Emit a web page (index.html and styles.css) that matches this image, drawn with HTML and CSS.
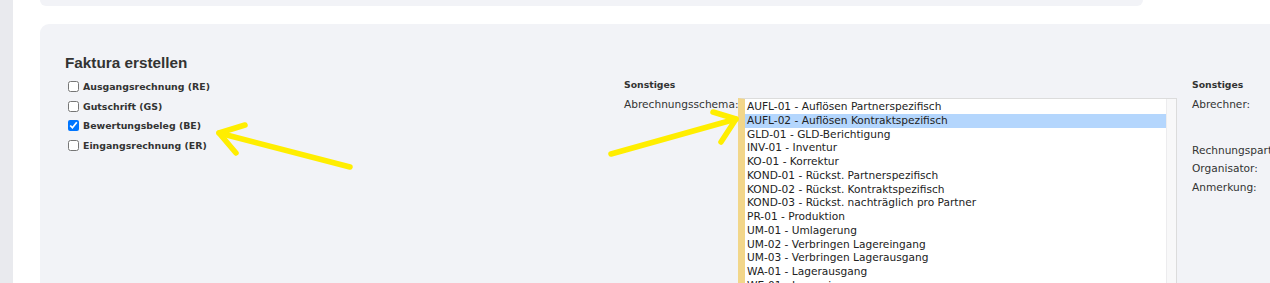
FILE: index.html
```html
<!DOCTYPE html>
<html lang="de">
<head>
  <meta charset="UTF-8" />
  <title>Faktura erstellen</title>
  <link rel="stylesheet" href="styles.css">
</head>
<body>
<div class="shell">
  <div class="sidebar"></div>
  <div class="main">
    <div class="card card-top"></div>

    <div class="card faktura">
      <h2>Faktura erstellen</h2>
      <div class="columns">
        <div class="col col-types">
          <label class="check"><input type="checkbox"> Ausgangsrechnung (RE)</label>
          <label class="check"><input type="checkbox"> Gutschrift (GS)</label>
          <label class="check"><input type="checkbox" checked> Bewertungsbeleg (BE)</label>
          <label class="check"><input type="checkbox"> Eingangsrechnung (ER)</label>
        </div>

        <div class="col col-schema">
          <h4>Sonstiges</h4>
          <div class="field">
            <span class="field-label">Abrechnungsschema:</span>
            <div class="listbox">
              <ul class="options">
                <li>AUFL-01 - Auflösen Partnerspezifisch</li>
                <li class="selected">AUFL-02 - Auflösen Kontraktspezifisch</li>
                <li>GLD-01 - GLD-Berichtigung</li>
                <li>INV-01 - Inventur</li>
                <li>KO-01 - Korrektur</li>
                <li>KOND-01 - Rückst. Partnerspezifisch</li>
                <li>KOND-02 - Rückst. Kontraktspezifisch</li>
                <li>KOND-03 - Rückst. nachträglich pro Partner</li>
                <li>PR-01 - Produktion</li>
                <li>UM-01 - Umlagerung</li>
                <li>UM-02 - Verbringen Lagereingang</li>
                <li>UM-03 - Verbringen Lagerausgang</li>
                <li>WA-01 - Lagerausgang</li>
                <li>WE-01 - Lagereingang</li>
              </ul>
              <div class="scrolltrack"></div>
            </div>
          </div>
        </div>

        <div class="col col-other">
          <h4>Sonstiges</h4>
          <div class="meta">Abrechner:</div>
          <div class="meta meta-gap">Rechnungspartner:</div>
          <div class="meta">Organisator:</div>
          <div class="meta">Anmerkung:</div>
        </div>
      </div>

      <!-- annotation arrows drawn over the form -->
      <svg class="arrows" width="1270" height="283" viewBox="0 0 1270 283">
        <g fill="none" stroke="#ffee00" stroke-width="5.5" stroke-linecap="round" stroke-linejoin="round">
          <path d="M350 167 L219 133" />
          <path d="M245 125 L219 133 L236 153" />
          <path d="M611 154 L736 119" />
          <path d="M713 112 L736 119 L721 142" />
        </g>
      </svg>
    </div>
  </div>
</div>
</body>
</html>
```

FILE: styles.css
```css
body {
  margin: 0;
  background: #fff;
  font-family: "DejaVu Sans", Verdana, sans-serif;
  font-size: 10.6px;
  color: #333;
  overflow: hidden;
}

.shell {
  display: flex;
  height: 283px;
}

.sidebar {
  width: 13px;
  flex: none;
  background: #e9eaee;
}

.main {
  flex: 1;
  padding-left: 27px;
  min-width: 0;
}

.card {
  background: #f2f3f7;
  border-radius: 9px;
}

.card-top {
  width: 1103px;
  height: 6px;
  border-radius: 0 0 9px 9px;
}

.faktura {
  position: relative;
  margin-top: 18px;
  width: 1300px;
  height: 300px;
  border-radius: 9px 0 0 0;
  padding: 30px 0 0 25px;
  box-sizing: border-box;
}

.faktura h2 {
  margin: 0 0 5px;
  font-family: "Liberation Sans", Arial, sans-serif;
  font-size: 15.3px;
  font-weight: bold;
  color: #333;
}

.columns {
  display: grid;
  grid-template-columns: 559px 568px 1fr;
}

.check {
  display: flex;
  align-items: center;
  height: 19.5px;
  font-size: 9.4px;
  font-weight: bold;
  color: #333;
}

.check input {
  width: 11px;
  height: 11px;
  margin: 0 4px 0 3px;
}

h4 {
  margin: 0;
  height: 21px;
  line-height: 15px;
  font-size: 9.3px;
  font-weight: bold;
  color: #333;
}

.field {
  display: flex;
}

.field-label {
  width: 114px;
  line-height: 13px;
}

.listbox {
  display: flex;
  width: 431px;
  height: 200px;
  background: #fff;
  border: 1px solid #dcdcdc;
  border-left: 7px solid #f2d68a;
  overflow: hidden;
}

.options {
  list-style: none;
  margin: 0;
  padding: 1px 0 0;
  flex: 1;
}

.options li {
  height: 13.75px;
  line-height: 13.75px;
  padding-left: 2px;
  color: #222;
  white-space: nowrap;
}

.options li.selected {
  background: #b4d6fd;
}

.scrolltrack {
  width: 9px;
  flex: none;
  background: #f8f8f9;
  border-left: 1px solid #ececee;
}

.meta {
  height: 18.5px;
  line-height: 13px;
  white-space: nowrap;
}

.meta-gap {
  margin-top: 27px;
}

.arrows {
  position: absolute;
  left: -40px;
  top: -24px;
  pointer-events: none;
}
```
